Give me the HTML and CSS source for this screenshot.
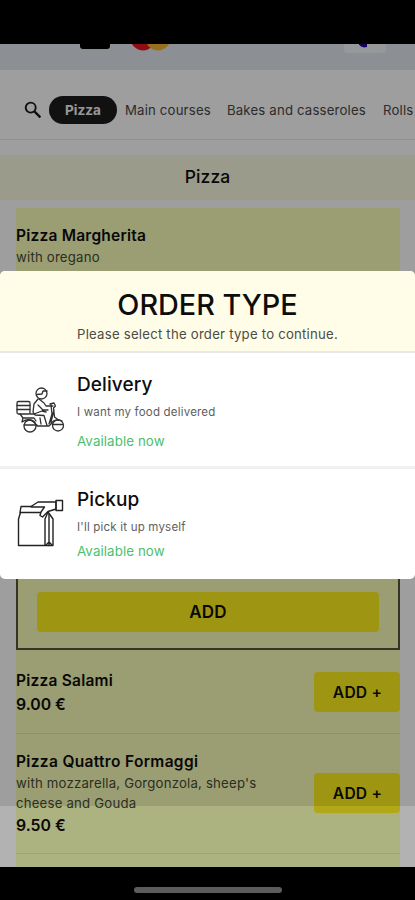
FILE: index.html
```html
<!DOCTYPE html>
<html lang="en">
<head>
<meta charset="utf-8">
<meta name="viewport" content="width=device-width">
<title>Order type</title>
<link rel="stylesheet" href="styles.css">
</head>
<body>
<div class="phone">
  <div class="status"></div>
  <main class="page">
    <div class="payments">
      <span class="pay-dark"></span>
      <svg class="pay-circles" width="40" height="24" viewBox="0 0 40 24"><circle cx="13" cy="-1" r="12.500" fill="#e21820"/><circle cx="28" cy="-1" r="12.500" fill="#f5b232"/></svg>
      <span class="pay-light"><svg width="12" height="8" viewBox="0 0 12 8"><path d="M0 0h8v3l-3 .5-3-1-2-2z" fill="#24009a"/></svg></span>
    </div>
    <nav class="nav">
      <svg class="search" width="18" height="18" viewBox="0 0 18 18" fill="none" stroke="#191919"><circle cx="6.700" cy="6.600" r="5" stroke-width="1.900"/><path d="M10.400 10.400l6 6" stroke-width="2.300"/></svg>
      <span class="pill">Pizza</span>
      <span class="tab main">Main courses</span>
      <span class="tab bakes">Bakes and casseroles</span>
      <span class="tab">Rolls</span>
    </nav>
    <h1 class="category">Pizza</h1>
    <div class="menu">
      <section class="featured">
        <h2 class="name margherita">Pizza Margherita</h2>
        <p class="desc">with oregano</p>
        <div class="options"><button class="btn wide">ADD</button></div>
      </section>
      <section class="item salami">
        <div class="info"><h2 class="name">Pizza Salami</h2><p class="price">9.00 €</p></div>
        <button class="btn">ADD +</button>
      </section>
      <section class="item formaggi">
        <div class="info"><h2 class="name">Pizza Quattro Formaggi</h2><p class="desc">with mozzarella, Gorgonzola, sheep's<br>cheese and Gouda</p><p class="price">9.50 €</p></div>
        <button class="btn">ADD +</button>
      </section>
    </div>
  </main>
  <div class="home"><span class="bar"></span></div>
  <div class="shade"></div>
  <div class="shade low"></div>
  <div class="modal">
    <header class="modal-head"><h2>ORDER TYPE</h2><p>Please select the order type to continue.</p></header>
    <div class="choice delivery">
      <svg class="icon" width="50" height="50" viewBox="0 0 50 50" fill="none" stroke="#303030" stroke-width="1.300" stroke-linejoin="round" stroke-linecap="round">
        <rect x="2" y="15.500" width="13" height="12.500" rx="1.500"/><path d="M2 19.500h13M2 23.500h13"/>
        <circle cx="26.500" cy="7.500" r="5.500"/><path d="M22 8.500l5-.5 1-3h4"/>
        <path d="M23 13l-4 5-1 8 2 3 9 .5 3 10M24 13l5 4 2 3h7M23 19l5 5h5M19 28l8-3 4 1"/>
        <path d="M35 18l4-1 1.500 3-2 2 1 9 4 3M36 19l1 9-3 10M39 24l-3 12"/>
        <path d="M5 28l3 4h11l2 3M15 28h5M8 32l-1 4q9-6 15 4h12l3-3M25 32l1 6M36 37q5-5 11-2"/>
        <circle cx="15" cy="40" r="6"/><circle cx="43" cy="39.500" r="5.500"/><path d="M9 39h13M37.500 38.500h10"/>
      </svg>
      <div class="text"><h3>Delivery</h3><p class="sub">I want my food delivered</p><p class="avail">Available now</p></div>
    </div>
    <div class="choice pickup">
      <svg class="icon" width="50" height="50" viewBox="0 0 50 50" fill="none" stroke="#222" stroke-width="1.400" stroke-linejoin="round" stroke-linecap="round">
        <path d="M5.500 13.500L3.500 20v26.500h34.500V20l-5-7-3 7v26.500"/>
        <path d="M16 7.500H6l-1 6h20M16 7.500l7-4.500h18v7l-8 2.500-5.500 5.500-2.500-1.500 1-3.500 3.500-5H16"/>
        <path d="M41 1.500h6.500v10H41zM34 15v31.500M31 46l3-3 3 3"/>
      </svg>
      <div class="text"><h3>Pickup</h3><p class="sub">I'll pick it up myself</p><p class="avail">Available now</p></div>
    </div>
  </div>
</div>
</body>
</html>
```
FILE: styles.css
```css
* { box-sizing: border-box; }
body, h1, h2, h3, p { margin: 0; }
body { font-family: Inter, "Liberation Sans", sans-serif; color: #0d0d0d; background: #000; }
.phone { position: relative; width: 415px; height: 900px; display: flex; flex-direction: column; overflow: hidden; }
.status { height: 44px; background: #000; }
.page { height: 823px; background: #fff; overflow: hidden; }
.payments { height: 26px; background: #e3e8ef; display: flex; align-items: flex-start; padding-left: 80px; }
.pay-dark { width: 30px; height: 5px; background: #000; border-radius: 0 0 3px 3px; }
.pay-circles { margin: -5px 0 0 20px; overflow: visible; }
.pay-light { width: 42px; height: 9px; margin-left: 174px; background: #f4f5f8; border-radius: 0 0 3px 3px; display: flex; justify-content: center; }
.nav { height: 70px; padding: 10px 0 0 24px; display: flex; align-items: center; border-bottom: 1px solid #eaeaea; white-space: nowrap; }
.search { margin-right: 7px; flex: none; }
.pill { width: 68px; height: 28px; border-radius: 14px; background: #1c1c1c; color: #f4f4f4; font-weight: 700; font-size: 13.6px; display: flex; align-items: center; justify-content: center; flex: none; }
.tab { font-size: 13.2px; color: #484848; letter-spacing: .17px; margin-left: 8px; flex: none; }
.tab.main { width: 86px; }
.tab.bakes { width: 140px; }
.tab + .tab { margin-left: 16px; }
.category { margin-top: 15px; height: 45px; padding-bottom: 2px; background: #fbfbe2; display: flex; align-items: center; justify-content: center; font-size: 17.5px; font-weight: 500; letter-spacing: .1px; }
.menu { margin: 8px 15px 0 16px; height: 659px; background: #f8ffb9; }
.featured { height: 442px; display: flex; flex-direction: column; }
.name { font-size: 15.5px; line-height: 24px; font-weight: 600; letter-spacing: .22px; position: relative; top: 1px; }
.margherita { margin-top: 15px; }
.formaggi .name { letter-spacing: .33px; }
.desc { font-size: 13.2px; line-height: 20px; color: #464b35; letter-spacing: .2px; }
.options { margin-top: auto; height: 100px; border: 2px solid #55573a; display: flex; align-items: flex-end; padding: 0 19px 16px; }
.btn { font-family: inherit; font-size: 15.6px; font-weight: 600; letter-spacing: .2px; color: #101000; border: 0; padding: 1px 0 0 1px; background: #fff020; border-radius: 4px; width: 86px; height: 40px; flex: none; }
.btn.wide { width: 100%; font-size: 17px; padding: 0; }
.item { display: flex; align-items: center; justify-content: space-between; border-bottom: 1px solid #e3e9a9; }
.salami { height: 84px; }
.formaggi { height: 120px; padding-bottom: 2px; }
.price { font-size: 15.8px; line-height: 24px; font-weight: 600; position: relative; top: 1px; }
.home { height: 33px; display: flex; justify-content: center; padding-top: 20px; }
.bar { width: 148px; height: 6px; border-radius: 3px; background: #5c5c5c; }
.shade { position: absolute; left: 0; top: 44px; width: 100%; height: 762px; background: rgba(0,0,0,.38); }
.shade.low { top: 806px; height: 61px; background: rgba(0,0,0,.3); }
.modal { position: absolute; left: 0; top: 271px; width: 415px; height: 308px; border-radius: 5px; background: #fff; overflow: hidden; }
.modal-head { height: 82px; background: #fffde8; border-bottom: 2px solid #e8e8e8; text-align: center; padding-top: 16px; }
.modal-head h2 { font-size: 28.8px; line-height: 36px; font-weight: 500; }
.modal-head p { font-size: 13.2px; line-height: 22px; color: #4c4c45; letter-spacing: .22px; }
.choice { display: flex; padding-left: 15px; }
.delivery { height: 116px; border-bottom: 3px solid #f0f0f0; }
.icon { flex: none; margin: 33px 12px 0 0; }
.pickup .icon { margin: 30px 12px 0 0; }
.choice h3 { margin-top: 19px; font-size: 19px; line-height: 26px; font-weight: 500; letter-spacing: .1px; }
.pickup h3 { margin-top: 18px; }
.sub { font-size: 11.5px; line-height: 18px; color: #5e5e5e; margin-top: 5px; letter-spacing: .2px; }
.avail { font-size: 13.3px; line-height: 20px; color: #4cc06e; margin-top: 10px; letter-spacing: .1px; }
.pickup .avail { margin-top: 5px; }
```
